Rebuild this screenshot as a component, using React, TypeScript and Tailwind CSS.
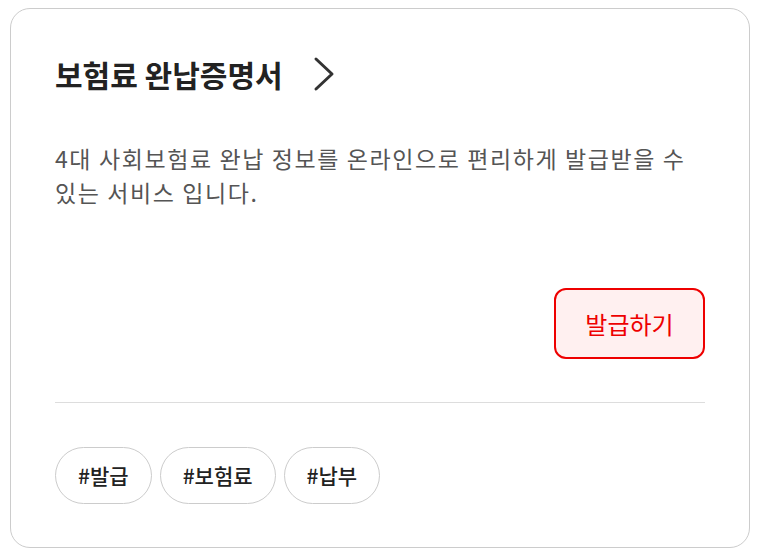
import React from "react";

export default function App() {
  const font = { fontFamily: '"Noto Sans CJK KR", "Noto Sans", sans-serif' };
  return (
    <div className="w-[761px] h-[556px] bg-white pt-[8px] pl-[10px]" style={font}>
      <div className="w-[740px] h-[540px] rounded-[20px] border border-[#cccccc] bg-white px-[44px] pt-[45px] flex flex-col">
        <div className="flex items-center h-[40px]">
          <span className="text-[30px] leading-[40px] font-bold text-[#222222]">보험료 완납증명서</span>
          <svg className="ml-[30px]" width="22" height="36" viewBox="0 0 22 36" fill="none">
            <path d="M3 3 L19 18 L3 33" stroke="#333333" strokeWidth="3" strokeLinecap="round" strokeLinejoin="round" />
          </svg>
        </div>
        <p className="mt-[47px] text-[23px] leading-[34px] text-[#555555] tracking-[1.6px] break-keep">
          4대 사회보험료 완납 정보를 온라인으로 편리하게 발급받을 수 있는 서비스 입니다.
        </p>
        <div className="mt-[79px] flex justify-end">
          <button className="w-[151px] h-[71px] rounded-[12px] border-2 border-[#ee0000] bg-[#fff0f0] text-[24px] text-[#ee0000]">
            발급하기
          </button>
        </div>
        <div className="mt-[43px] h-px bg-[#dddddd]" />
        <div className="mt-[44px] flex gap-[8px]">
          {["#발급", "#보험료", "#납부"].map((t) => (
            <span
              key={t}
              className="h-[57px] px-[22px] rounded-full border border-[#cccccc] flex items-center text-[21px] font-medium text-[#222222]"
            >
              {t}
            </span>
          ))}
        </div>
      </div>
    </div>
  );
}
